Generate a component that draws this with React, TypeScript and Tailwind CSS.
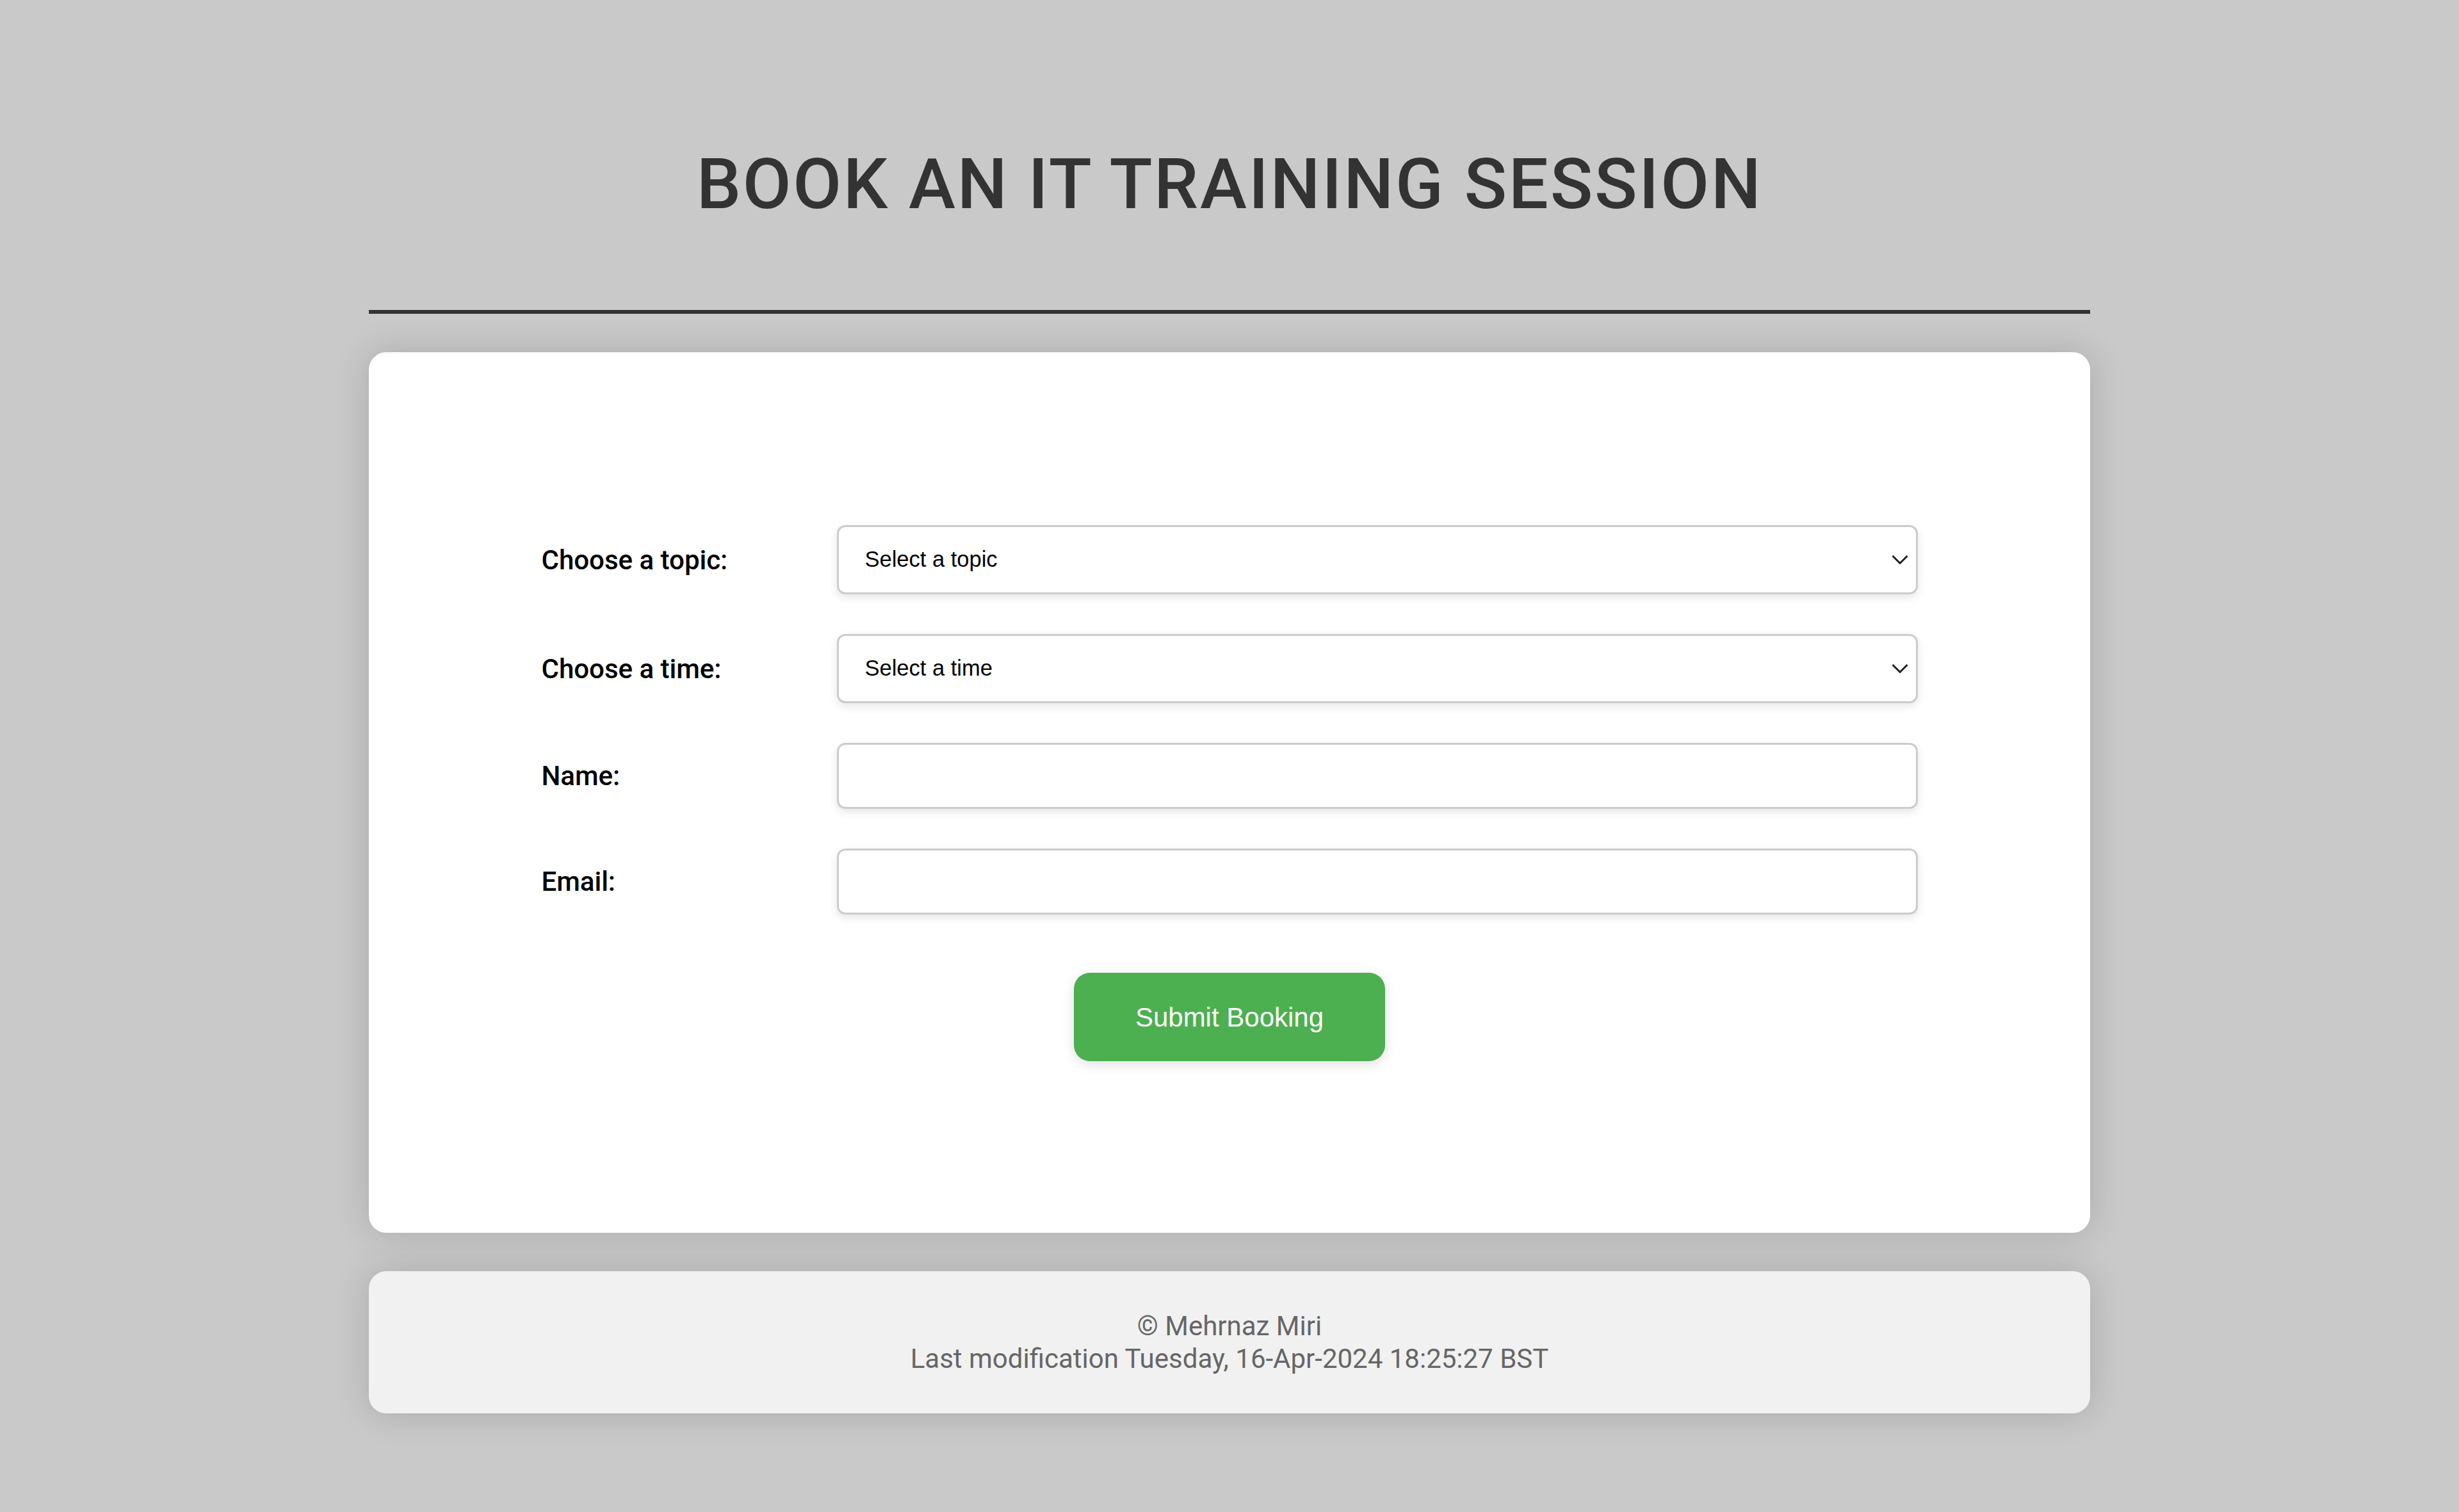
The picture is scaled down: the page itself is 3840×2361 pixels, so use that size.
import React from "react";

function Chevron() {
  return (
    <svg
      className="pointer-events-none absolute right-[15px] top-1/2 -translate-y-1/2"
      width="26"
      height="15"
      viewBox="0 0 26 15"
      fill="none"
    >
      <path d="M1.5 1.5 L13 13 L24.5 1.5" stroke="#1f1f1f" strokeWidth="3" />
    </svg>
  );
}

function SelectRow({ label, placeholder, mt }: { label: string; placeholder: string; mt: boolean }) {
  return (
    <div className={`flex h-[108px] items-center ${mt ? "mt-[62px]" : ""}`}>
      <label className="w-[461px] shrink-0 text-[42px] font-medium text-black">{label}</label>
      <div className="relative h-[108px] w-[1688px]">
        <select
          defaultValue=""
          className="h-full w-full appearance-none rounded-[13px] border-[3px] border-[#cccccc] bg-white pl-[41px] text-[34.5px] text-black shadow-[0_5px_14px_rgba(0,0,0,0.1)] outline-none"
          style={{ fontFamily: '"Liberation Sans", Arial, sans-serif' }}
        >
          <option value="">{placeholder}</option>
        </select>
        <Chevron />
      </div>
    </div>
  );
}

function InputRow({ label, type }: { label: string; type: string }) {
  return (
    <div className="mt-[62px] flex h-[103px] items-center">
      <label className="w-[461px] shrink-0 text-[42px] font-medium text-black">{label}</label>
      <input
        type={type}
        className="h-[103px] w-[1688px] rounded-[13px] border-[3px] border-[#cccccc] bg-white px-[30px] text-[34.5px] shadow-[0_5px_14px_rgba(0,0,0,0.1)] outline-none"
        style={{ fontFamily: '"Liberation Sans", Arial, sans-serif' }}
      />
    </div>
  );
}

export default function App() {
  return (
    <div
      className="min-h-screen bg-[#c9c9c9] pb-[154px]"
      style={{ fontFamily: 'Roboto, "Noto Sans", Arial, sans-serif' }}
    >
      <header className="pt-[223px]">
        <h1 className="text-center text-[110px] font-medium leading-[129px] tracking-[2.7px] text-[#333333]">
          BOOK AN IT TRAINING SESSION
        </h1>
        <div className="mx-auto mt-[132px] h-[6px] w-[2688px] bg-[#333333]" />
      </header>

      <main className="mx-auto mt-[60px] h-[1375px] w-[2688px] rounded-[27px] bg-white shadow-[0_0_55px_rgba(0,0,0,0.16)]">
        <form className="mx-auto flex w-[2149px] flex-col pt-[270px]">
          <SelectRow label="Choose a topic:" placeholder="Select a topic" mt={false} />
          <SelectRow label="Choose a time:" placeholder="Select a time" mt={true} />
          <InputRow label="Name:" type="text" />
          <InputRow label="Email:" type="email" />
          <div className="mt-[91px] flex justify-center">
            <button
              type="button"
              className="h-[138px] w-[486px] rounded-[25px] bg-[#4caf50] text-[42px] text-white shadow-[0_5px_20px_rgba(0,0,0,0.12)]"
              style={{ fontFamily: '"Liberation Sans", Arial, sans-serif' }}
            >
              Submit Booking
            </button>
          </div>
        </form>
      </main>

      <footer className="mx-auto mt-[60px] h-[222px] w-[2688px] rounded-[27px] bg-[#f1f1f1] pt-[60px] text-center text-[42px] leading-[51px] text-[#666666] shadow-[0_0_55px_rgba(0,0,0,0.16)]">
        <p>© Mehrnaz Miri</p>
        <p>Last modification Tuesday, 16-Apr-2024 18:25:27 BST</p>
      </footer>
    </div>
  );
}
